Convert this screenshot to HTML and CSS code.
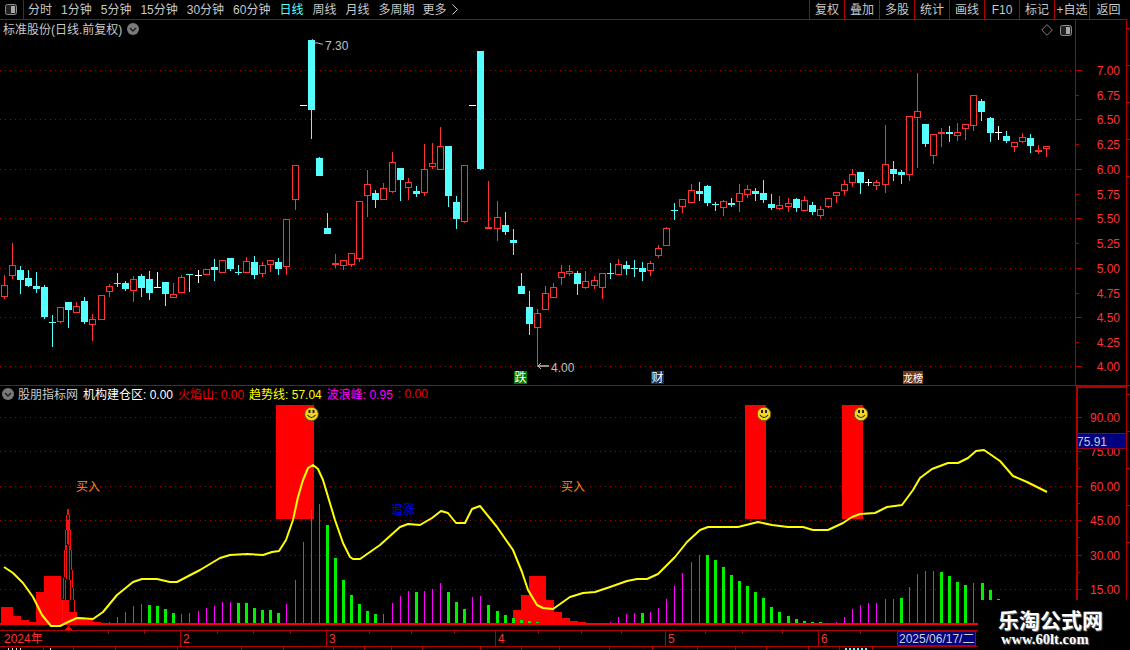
FILE: index.html
```html
<!DOCTYPE html>
<html lang="zh-CN">
<head>
<meta charset="utf-8">
<title>标准股份 日线</title>
<link rel="stylesheet" href="styles.css">
</head>
<body>
<div class="app">
  <header class="toolbar">
    <button class="tool-icon">
      <svg width="12" height="11" viewBox="0 0 12 11"><rect class="panel-frame" x="0.5" y="0.5" width="11" height="10" rx="2"/><rect class="panel-fill" x="6" y="2" width="4" height="7"/></svg>
    </button>
    <nav class="periods">
      <span>分时</span><span>1分钟</span><span>5分钟</span><span>15分钟</span><span>30分钟</span><span>60分钟</span>
      <span class="active">日线</span><span>周线</span><span>月线</span><span>多周期</span>
      <span class="more">更多<svg width="6" height="11" viewBox="0 0 6 11"><polyline class="more-arrow" points="0.5,0.5 5.5,5.5 0.5,10.5"/></svg></span>
    </nav>
    <nav class="actions">
      <span>复权</span><span>叠加</span><span>多股</span><span>统计</span><span>画线</span><span>F10</span><span>标记</span><span>+自选</span><span>返回</span>
    </nav>
  </header>

  <section class="pane upper">
    <div class="plot">
      <svg id="price" width="1075" height="365" viewBox="0 20 1075 365"></svg>
      <div class="title">
        <span class="name">标准股份(日线.前复权)</span>
        <svg class="chev" width="12" height="12" viewBox="0 0 12 12"><circle class="chev-bg" cx="6" cy="6" r="6"/><polyline class="chev-line" points="3,5 6,8 9,5"/></svg>
      </div>
      <div class="pane-tools">
        <svg width="12" height="12" viewBox="0 0 12 12"><polygon class="diamond" points="6,0.7 11.3,6 6,11.3 0.7,6"/></svg>
        <svg width="12" height="11" viewBox="0 0 12 11"><rect class="panel-frame" x="0.5" y="0.5" width="11" height="10" rx="2"/><rect class="panel-fill" x="6" y="2" width="4" height="7"/></svg>
      </div>
    </div>
    <div class="axis">
      <svg id="price-axis" width="50" height="365" viewBox="1076 20 50 365"></svg>
    </div>
    <div class="gutter"><i></i><i></i><i></i><i></i><i></i></div>
  </section>

  <section class="pane lower">
    <div class="plot">
      <svg id="indicator" width="1076" height="244" viewBox="0 386 1076 244"></svg>
      <div class="title legend">
        <svg class="chev" width="12" height="12" viewBox="0 0 12 12"><circle class="chev-bg" cx="6" cy="6" r="6"/><polyline class="chev-line" points="3,5 6,8 9,5"/></svg>
        <span class="name">股朋指标网</span>
        <span class="white">机构建仓区: 0.00</span>
        <span class="red">火焰山: 0.00</span>
        <span class="yellow">趋势线: 57.04</span>
        <span class="magenta">波浪峰: 0.95</span>
        <span class="red">: 0.00</span>
      </div>
    </div>
    <div class="axis">
      <svg id="indicator-axis" width="48" height="242" viewBox="1078 388 48 242"></svg>
    </div>
    <div class="gutter"><i></i><i></i><i></i><i></i><i></i></div>
  </section>

  <svg id="timeline" class="timeline" width="1130" height="16" viewBox="0 631 1130 16"></svg>
  <svg id="tabs" class="tabs" width="1130" height="3" viewBox="0 647 1130 3"></svg>

  <aside class="watermark">
    <strong>乐淘公式网</strong>
    <em>www.60lt.com</em>
  </aside>
</div>
<script src="app.js"></script>
</body>
</html>
```

FILE: styles.css
```css
* { box-sizing: border-box; }
html, body { margin: 0; background: #000; }
body { font-family: "Liberation Sans", "Noto Sans CJK SC", sans-serif; font-size: 12px; color: #c8c8c8; }
svg { display: block; }

.app { position: relative; width: 1130px; height: 650px; overflow: hidden; display: flex; flex-direction: column; background: #000; }

.toolbar { flex: none; display: flex; width: 1127px; height: 20px; border-bottom: 1px solid #b00000; line-height: 20px; }
.tool-icon { flex: none; width: 24px; padding: 0 0 0 5px; background: none; border: 0; border-right: 1px solid #b00000; }
.periods { display: flex; gap: 9px; padding-left: 4px; white-space: nowrap; }
.periods .active { color: #54ffff; }
.more { display: flex; align-items: center; gap: 5px; margin-left: -1px; }
.more-arrow { fill: none; stroke: #c8c8c8; stroke-width: 1; }
.actions { display: flex; margin-left: auto; }
.actions span { width: 35px; border-left: 1px solid #b00000; text-align: center; white-space: nowrap; }
.actions span:last-child { width: 38px; }
.panel-frame { fill: #222; stroke: #8c8c8c; stroke-width: 1; }
.panel-fill { fill: #a8a8a8; }
.diamond { fill: none; stroke: #808080; stroke-width: 1; }

.pane { flex: none; display: flex; position: relative; }
.upper { height: 366px; width: 1130px; border-bottom: 1px solid #b00000; }
.lower { height: 245px; width: 1130px; border-bottom: 1px solid #b00000; }
.plot { position: relative; width: 1075px; }
.lower .plot { width: 1076px; }
.axis { width: 52px; border-left: 1px solid #b00000; border-right: 1px solid #b00000; }
.lower .axis { width: 51px; border-left-width: 2px; border-top: 2px solid #b00000; }
.gutter { width: 3px; display: flex; flex-direction: column; gap: 36px; padding-top: 8px; }
.gutter i { display: block; height: 1px; background: #b00000; }

.title { position: absolute; left: 3px; top: 0; display: flex; align-items: center; gap: 5px; height: 17px; white-space: nowrap; }
.legend { left: 2px; top: -1px; gap: 5px; height: 17px; }
.legend .chev { margin-right: -1px; }
.chev-bg { fill: #7a7a7a; }
.chev-line { fill: none; stroke: #1c1c1c; stroke-width: 1.4; }
.white { color: #fff; }
.red { color: #f00000; }
.yellow { color: #ffff00; }
.magenta { color: #ff00ff; }
.pane-tools { position: absolute; right: 3px; top: 4px; display: flex; align-items: center; gap: 7px; }

.timeline, .tabs { flex: none; }

.watermark { position: absolute; left: 978px; top: 600px; width: 152px; height: 50px; background: #000; display: flex; flex-direction: column; align-items: flex-start; padding: 7px 0 0 20px; color: #fff; }
.watermark strong { font-family: "Noto Sans CJK SC", sans-serif; font-size: 21px; line-height: 24px; font-weight: 700; text-shadow: 1px 1px 1px #777; }
.watermark em { font-family: "Liberation Serif", serif; font-size: 14.6px; line-height: 15px; margin: 1px 0 0 3px; font-style: normal; font-weight: 700; text-shadow: 1px 1px 1px #666; }

/* chart parts */
.grid { stroke: #a80000; stroke-width: 1; stroke-dasharray: 1 4; fill: none; }
.wick-r { stroke: #ff3232; stroke-width: 1; shape-rendering: crispEdges; }
.wick-c { stroke: #54ffff; stroke-width: 1; shape-rendering: crispEdges; }
.wick-w { stroke: #fff; stroke-width: 1; shape-rendering: crispEdges; }
.body-r { fill: #000; stroke: #ff3232; stroke-width: 1; shape-rendering: crispEdges; }
.body-c { fill: #54ffff; shape-rendering: crispEdges; }
.body-w { fill: #fff; shape-rendering: crispEdges; }
.note { fill: #c0c0c0; font-size: 12px; }
.note-line { fill: none; stroke: #c0c0c0; stroke-width: 1; }
.badge { font-size: 12px; fill: #fff; text-anchor: middle; }
.badge-narrow { font-size: 10px; }
.bg-green { fill: #007a00; }
.bg-navy { fill: #0c3468; }
.bg-brown { fill: #7a3a10; }
.tick { stroke: #b00000; stroke-width: 1; shape-rendering: crispEdges; }
.axis-label { fill: #ff3232; font-size: 12px; text-anchor: end; }
.cur-box { fill: #000080; stroke: #8c0030; stroke-width: 1; shape-rendering: crispEdges; }
.cur-text { fill: #c8c8c8; font-size: 12px; }

.flame { fill: #ff0000; shape-rendering: crispEdges; }
.spike { fill: none; stroke: #ff1010; stroke-width: 1; shape-rendering: crispEdges; }
.trend { fill: none; stroke: #ffff00; stroke-width: 2; stroke-linejoin: round; }
.bar-g { fill: #00f000; shape-rendering: crispEdges; }
.bar-m { fill: #ff00ff; shape-rendering: crispEdges; }
.buy { fill: #ff8c1a; font-size: 12px; }
.chase { fill: #0000ff; font-size: 12px; }
.smile-face { fill: #f4d41e; stroke: #6e5a10; stroke-width: 1; }
.smile-eye { fill: #222; }
.smile-mouth { fill: none; stroke: #222; stroke-width: 1.2; }

.month { fill: #ff3232; font-size: 12px; }
.date-box { fill: #000080; stroke: #2020d0; stroke-width: 1; shape-rendering: crispEdges; }
.date-text { fill: #d0d0d0; font-size: 12px; }
.peek-w { fill: #d8d8d8; }
.peek-c { fill: #54ffff; }
```

FILE: app.js
```js
const NS = 'http://www.w3.org/2000/svg';
function add(parent, tag, attrs, text) {
  const n = document.createElementNS(NS, tag);
  for (const k in attrs) n.setAttribute(k === 'cls' ? 'class' : k, attrs[k]);
  if (text !== undefined) n.textContent = text;
  parent.appendChild(n);
  return n;
}
const $ = id => document.getElementById(id);

/* ---------- price pane: [type, x, high, top, bottom, low] in page pixels ---------- */
const candles = [
['r',4,275,285,297,299],['r',12,243,265,276,279],['c',20,266,270,280,294],['c',28,270,278,286,287],
['c',36,272,286,289,293],['c',44,285,287,317,319],['c',52,315,322,323,347],['r',60,307,307,322,323],
['c',68,302,302,310,328],['r',76,302,306,313,313],['c',84,297,301,322,324],['r',92,314,319,325,341],
['r',101,295,295,320,320],['r',109,284,286,292,297],['c',117,273,283,284,287],['c',125,281,283,289,291],
['r',133,276,279,291,302],['c',141,274,276,288,297],['c',149,271,279,293,300],['w',157,272,287,288,288],
['c',165,282,282,294,306],['r',173,283,294,298,298],['r',181,275,277,293,293],['c',189,274,274,275,292],
['w',198,270,275,276,283],['r',206,269,269,275,275],['c',214,259,267,270,281],['r',222,260,260,273,273],
['c',230,258,258,269,271],['c',238,265,272,273,275],['r',246,257,261,273,273],['c',254,256,262,275,279],
['r',262,262,265,274,277],['r',270,260,260,265,272],['c',278,258,262,269,275],['r',286,219,219,267,275],
['r',295,165,165,200,210],['w',303,105,105,106,106],['c',311,40,40,110,139],['c',319,157,158,176,176],
['c',327,213,228,234,234],['r',335,254,263,265,268],['r',343,260,260,266,270],['r',351,253,253,265,267],
['r',359,201,201,259,262],['r',367,170,184,196,217],['c',375,190,193,200,208],['r',383,183,188,200,200],
['r',392,152,162,192,193],['c',400,168,168,180,201],['r',408,178,182,188,200],['c',416,186,191,194,197],
['r',424,144,169,193,196],['r',432,143,163,167,169],['r',440,127,146,170,170],['c',448,146,146,196,207],
['c',456,196,202,219,229],['r',464,165,165,222,223],['w',472,105,105,106,106],['c',480,51,51,169,170],
['r',488,181,227,229,229],['r',497,201,217,229,241],['c',505,212,225,232,235],['c',513,229,240,243,255],
['c',521,273,286,294,294],['c',529,291,307,324,335],['r',537,309,313,328,367],['r',545,286,293,310,310],
['r',553,283,287,298,298],['r',561,265,272,278,285],['r',569,265,271,274,276],['c',577,271,273,284,295],
['r',585,271,281,288,289],['r',594,276,280,286,289],['r',602,273,273,288,299],['c',610,263,273,274,279],
['r',618,259,264,275,275],['c',626,261,265,269,275],['c',634,260,268,269,277],['c',642,262,268,272,281],
['r',650,261,263,271,276],['r',658,245,248,256,258],['r',666,227,228,246,246],['c',674,203,210,211,220],
['r',682,199,199,207,213],['r',691,184,190,203,203],['c',699,182,191,194,201],['c',707,185,186,203,206],
['c',715,202,204,205,211],['r',723,200,201,208,216],['c',731,198,203,205,207],['r',739,184,193,202,212],
['r',747,185,189,195,198],['c',755,188,191,194,201],['c',763,180,193,200,203],['c',771,194,204,208,210],
['r',779,196,205,209,210],['r',788,198,203,207,212],['c',796,198,199,208,212],['r',804,196,200,211,211],
['c',812,202,205,212,215],['r',820,206,209,216,218],['r',828,198,198,207,208],['r',836,192,192,196,203],
['r',844,180,184,191,195],['r',852,169,174,183,187],['c',860,172,172,183,194],['w',868,179,182,183,186],
['r',876,180,182,186,190],['r',885,125,164,185,193],['c',893,161,169,174,181],['c',901,170,172,175,184],
['r',909,116,116,175,181],['r',917,73,111,118,168],['c',925,124,124,144,147],['r',933,134,134,156,164],
['r',941,128,132,134,147],['c',949,126,132,134,142],['r',957,123,132,136,141],['r',965,124,124,129,140],
['r',973,95,95,126,131],['c',981,99,101,112,121],['c',990,117,118,133,142],['w',998,126,132,133,140],
['c',1006,131,136,141,143],['r',1014,142,142,147,152],['r',1022,133,137,142,143],['c',1030,134,138,146,153],
['r',1038,145,150,152,154],['r',1046,146,146,149,157]
];

const price = $('price');
[70, 119, 169, 218, 268, 317, 366].forEach(y =>
  add(price, 'line', { cls: 'grid', x1: 0, x2: 1075, y1: y + 0.5, y2: y + 0.5 }));

candles.forEach(([t, x, hi, top, bot, lo]) => {
  if (hi < top) add(price, 'line', { cls: 'wick-' + t, x1: x + 0.5, x2: x + 0.5, y1: hi, y2: top });
  if (lo > bot) add(price, 'line', { cls: 'wick-' + t, x1: x + 0.5, x2: x + 0.5, y1: bot, y2: lo });
  if (t === 'r') add(price, 'rect', { cls: 'body-r', x: x - 2.5, y: top + 0.5, width: 6, height: Math.max(bot - top - 1, 1) });
  else add(price, 'rect', { cls: 'body-' + t, x: x - 3, y: top, width: 7, height: bot - top });
});

add(price, 'polyline', { cls: 'note-line', points: '312,39 315,43 318,43 321,44 323,44' });
add(price, 'text', { cls: 'note', x: 325, y: 50 }, '7.30');
add(price, 'polyline', { cls: 'note-line', points: '541,363 538,366 549,366 538,366 541,369' });
add(price, 'text', { cls: 'note', x: 551, y: 372 }, '4.00');

function badge(x, w, bg, label, extra) {
  add(price, 'rect', { cls: bg, x, y: 371, width: w, height: 13 });
  add(price, 'text', { cls: 'badge' + (extra || ''), x: x + w / 2, y: 382 }, label);
}
badge(514, 13, 'bg-green', '跌');
badge(651, 13, 'bg-navy', '财');
badge(903, 20, 'bg-brown', '龙榜', ' badge-narrow');

/* price axis */
const pa = $('price-axis');
[['7.00',70],['6.75',95],['6.50',119],['6.25',144],['6.00',169],['5.75',194],['5.50',218],['5.25',243],['5.00',268],['4.75',293],['4.50',317],['4.25',342],['4.00',366]]
  .forEach(([label, y], i) => {
    add(pa, 'line', { cls: 'tick', x1: 1076, x2: i % 2 ? 1079 : 1082, y1: y + 0.5, y2: y + 0.5 });
    add(pa, 'text', { cls: 'axis-label', x: 1120, y: y + 5 }, label);
  });

/* ---------- indicator pane ---------- */
const ind = $('indicator');
[417, 451, 486, 520, 555, 589].forEach(y =>
  add(ind, 'line', { cls: 'grid', x1: 0, x2: 1076, y1: y + 0.5, y2: y + 0.5 }));

add(ind, 'rect', { cls: 'flame', x: 276, y: 405, width: 38, height: 114 });
add(ind, 'rect', { cls: 'flame', x: 745, y: 405, width: 21, height: 114 });
add(ind, 'rect', { cls: 'flame', x: 842, y: 405, width: 21, height: 114 });

/* stepped flame area: [from, to, top] */
[[1,13,607],[13,21,616],[21,29,620],[29,36,622],[36,44,592],[44,61,576],[61,69,600],[69,77,612],[77,85,617],[85,93,620],[93,101,622],
 [513,521,610],[521,529,595],[529,546,576],[546,554,600],[554,562,612],[562,570,618],[570,578,621],[578,586,622]]
  .forEach(([a, b, y]) => add(ind, 'rect', { cls: 'flame', x: a, y, width: b - a, height: 624 - y }));

add(ind, 'polyline', { cls: 'spike', points: '62,624 63,600 64,578 65,550 66,530 67,515 68,509 69,515 70,530 71,550 72,570 73,588 74,600 75,612 76,624' });
add(ind, 'polyline', { cls: 'spike', points: '65,600 66,580 67,545 68,520 69,545 70,580 71,600' });

/* histogram bars: [x, top, kind] */
const bars = [
[109,622,'m'],[117,617,'m'],[125,612,'m'],[133,606,'m'],[141,604,'m'],[149,605,'g'],[157,606,'g'],[165,609,'g'],[173,613,'g'],
[181,614,'m'],[189,613,'m'],[198,611,'m'],[206,608,'m'],[214,606,'m'],[222,602,'m'],[230,602,'m'],[238,603,'g'],[246,603,'g'],
[254,608,'g'],[262,610,'g'],[270,610,'g'],[278,613,'g'],[286,604,'m'],[295,580,'m'],[303,542,'m'],[311,510,'m'],[319,504,'m'],
[327,525,'g'],[335,558,'g'],[343,580,'g'],[351,595,'g'],[359,604,'g'],[367,611,'g'],[375,614,'g'],[383,614,'m'],[392,603,'m'],
[400,596,'m'],[408,591,'m'],[416,592,'g'],[424,591,'m'],[432,589,'m'],[440,583,'m'],[448,592,'g'],[456,602,'g'],[464,609,'g'],
[472,597,'m'],[480,596,'m'],[488,605,'g'],[497,611,'g'],[505,615,'g'],[513,618,'g'],[521,620,'g'],[529,621,'g'],[537,622,'g'],
[545,623,'g'],[553,623,'g'],[561,623,'g'],[610,622,'m'],[618,617,'m'],[626,614,'m'],[634,613,'m'],[642,613,'g'],[650,612,'m'],
[658,608,'m'],[666,599,'m'],[674,586,'m'],[682,573,'m'],[691,562,'m'],[699,555,'m'],[707,555,'g'],[715,560,'g'],[723,567,'g'],
[731,575,'g'],[739,581,'g'],[747,586,'g'],[755,592,'g'],[763,598,'g'],[771,607,'g'],[779,612,'g'],[788,616,'g'],[796,619,'g'],
[804,621,'g'],[812,622,'g'],[820,622,'g'],[828,623,'g'],[836,622,'m'],[844,617,'m'],[852,609,'m'],[860,605,'m'],[868,603,'m'],
[876,603,'m'],[885,599,'m'],[893,599,'m'],[901,598,'g'],[909,587,'m'],[917,574,'m'],[925,571,'m'],[933,571,'m'],[941,572,'g'],
[949,576,'g'],[957,582,'g'],[965,585,'g'],[973,583,'m'],[982,583,'g'],[990,590,'g'],[998,599,'g']
];
bars.forEach(([x, y, k]) => {
  if (k === 'g') add(ind, 'rect', { cls: 'bar-g', x: x - 1, y, width: 3, height: 624 - y });
  else add(ind, 'rect', { cls: 'bar-m', x, y, width: 1, height: 624 - y });
});
[[3,623,3],[11,623,3],[19,623,3]].forEach(([x, y, w]) => add(ind, 'rect', { cls: 'bar-g', x, y, width: w, height: 1 }));

add(ind, 'rect', { cls: 'flame', x: 0, y: 623, width: 1076, height: 2 });
add(ind, 'polygon', { cls: 'flame', points: '68.5,626 72,630 65,630' });

const trend = [[4,567],[13,573],[23,583],[33,597],[42,615],[51,626],[60,626],[68,622],[77,618],[93,619],[103,612],[117,595],[133,582],[142,579],[157,579],[170,582],[177,582],[200,570],[220,558],[230,555],[247,554],[263,555],[272,552],[279,551],[286,540],[293,520],[298,497],[303,480],[308,468],[313,465],[318,469],[323,480],[335,520],[343,543],[350,557],[353,559],[360,559],[380,545],[400,527],[408,524],[420,525],[432,518],[441,511],[448,513],[456,523],[465,523],[472,509],[480,506],[497,527],[513,550],[522,572],[528,590],[537,605],[543,608],[553,609],[570,597],[583,593],[595,592],[610,587],[627,581],[637,579],[647,579],[658,574],[675,557],[687,542],[700,530],[708,527],[738,527],[758,522],[772,525],[788,527],[803,527],[813,530],[828,530],[843,523],[852,517],[860,514],[875,513],[887,507],[902,505],[913,490],[920,478],[932,469],[948,463],[958,463],[968,458],[976,451],[984,450],[1000,461],[1013,476],[1027,482],[1047,492]];
add(ind, 'polyline', { cls: 'trend', points: trend.map(p => p.join(',')).join(' ') });

add(ind, 'text', { cls: 'buy', x: 76, y: 491 }, '买入');
add(ind, 'text', { cls: 'buy', x: 561, y: 491 }, '买入');
add(ind, 'text', { cls: 'chase', x: 391, y: 514 }, '追涨');

[311.5, 764, 861].forEach(cx => {
  const cy = 414;
  add(ind, 'circle', { cls: 'smile-face', cx, cy, r: 6.8 });
  add(ind, 'rect', { cls: 'smile-eye', x: cx - 3, y: cy - 4, width: 2, height: 3 });
  add(ind, 'rect', { cls: 'smile-eye', x: cx + 1, y: cy - 4, width: 2, height: 3 });
  add(ind, 'path', { cls: 'smile-mouth', d: `M${cx - 4} ${cy + 1}Q${cx} ${cy + 6} ${cx + 4} ${cy + 1}` });
});

/* indicator axis */
const ia = $('indicator-axis');
[['90.00',417],['75.00',451],['60.00',486],['45.00',520],['30.00',555],['15.00',589]].forEach(([label, y]) => {
  add(ia, 'line', { cls: 'tick', x1: 1078, x2: 1082, y1: y + 0.5, y2: y + 0.5 });
  add(ia, 'line', { cls: 'tick', x1: 1078, x2: 1080, y1: y + 17.5, y2: y + 17.5 });
  add(ia, 'text', { cls: 'axis-label', x: 1120, y: y + 5 }, label);
});
add(ia, 'rect', { cls: 'cur-box', x: 1077.5, y: 433.5, width: 49, height: 15 });
add(ia, 'text', { cls: 'cur-text', x: 1077, y: 446 }, '75.91');

/* ---------- time axis ---------- */
const tl = $('timeline');
add(tl, 'line', { cls: 'tick', x1: 0, x2: 1130, y1: 646.5, y2: 646.5 });
[108,144,217,253,290,369,411,454,538,581,621,705,742,782,860].forEach(x =>
  add(tl, 'line', { cls: 'tick', x1: x + 0.5, x2: x + 0.5, y1: 631, y2: 634 }));
[[4,'2024年'],[183,'2'],[329,'3'],[498,'4'],[668,'5'],[821,'6']].forEach(([x, t], i) => {
  if (i) add(tl, 'line', { cls: 'tick', x1: x - 2.5, x2: x - 2.5, y1: 631, y2: 646 });
  add(tl, 'text', { cls: 'month', x, y: 643 }, t);
});
add(tl, 'rect', { cls: 'date-box', x: 897.5, y: 631.5, width: 78, height: 14 });
add(tl, 'text', { cls: 'date-text', x: 899, y: 643 }, '2025/06/17/二');

/* ---------- tab strip, cut off by the window edge ---------- */
const tb = $('tabs');
[43,73,115,177,241,283,333,364,391,422,480,521,559,609,652,697,735,766,808,839,872].forEach(x =>
  add(tb, 'line', { cls: 'tick', x1: x + 0.5, x2: x + 0.5, y1: 647, y2: 650 }));
[8,12,16,20,50].forEach(x => add(tb, 'rect', { cls: 'peek-w', x, y: 648, width: 1, height: 2 }));
[845,849,853,857,861,865].forEach(x => add(tb, 'rect', { cls: 'peek-c', x, y: 648, width: 2, height: 2 }));
```
